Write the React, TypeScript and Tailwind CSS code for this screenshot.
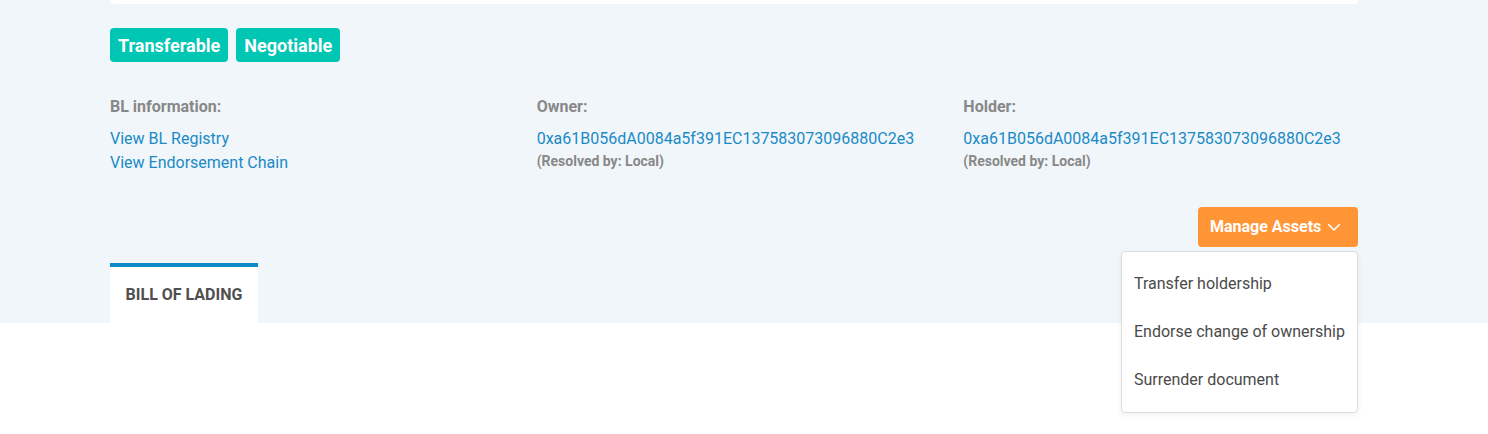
import React from "react";

const ChevronDown = () => (
  <svg width="18" height="18" viewBox="0 0 24 24" fill="none" stroke="currentColor" strokeWidth="2.2" strokeLinecap="round" strokeLinejoin="round">
    <path d="M5 9l7 7 7-7" />
  </svg>
);

export default function App() {
  return (
    <div className="min-h-[434px] bg-white" style={{ fontFamily: "Roboto, 'Noto Sans', sans-serif" }}>
      <div className="bg-[#f1f6fa]">
        <div className="w-[1248px] ml-[110px]">
          <div className="h-[4px] bg-white rounded-b-[4px]" />
          <div className="flex gap-2 mt-6">
            <span className="h-[34px] flex items-center px-2 rounded-[4px] bg-[#00c6b4] text-white font-bold text-[18px]">Transferable</span>
            <span className="h-[34px] flex items-center px-2 rounded-[4px] bg-[#00c6b4] text-white font-bold text-[18px]">Negotiable</span>
          </div>
          <div className="grid grid-cols-3 gap-8 mt-[35px]">
            <div>
              <div className="text-[16px] leading-[20px] font-bold text-[#888888]">BL information:</div>
              <div className="mt-[10px] flex flex-col text-[16px] leading-[24px] text-[#1a8ac6]">
                <span>View BL Registry</span>
                <span>View Endorsement Chain</span>
              </div>
            </div>
            <div>
              <div className="text-[16px] leading-[20px] font-bold text-[#888888]">Owner:</div>
              <div className="mt-[10px] text-[16px] leading-[24px] text-[#1a8ac6]">0xa61B056dA0084a5f391EC137583073096880C2e3</div>
              <div className="text-[14px] leading-[20px] font-bold text-[#888888]">(Resolved by: Local)</div>
            </div>
            <div>
              <div className="text-[16px] leading-[20px] font-bold text-[#888888]">Holder:</div>
              <div className="mt-[10px] text-[16px] leading-[24px] text-[#1a8ac6]">0xa61B056dA0084a5f391EC137583073096880C2e3</div>
              <div className="text-[14px] leading-[20px] font-bold text-[#888888]">(Resolved by: Local)</div>
            </div>
          </div>
          <div className="flex justify-end mt-[32px]">
            <div className="relative">
              <button className="h-[40px] w-[160px] flex items-center px-3 gap-[4px] rounded-[4px] bg-[#ff9535] text-white font-bold text-[16px]">
                Manage Assets
                <ChevronDown />
              </button>
              <div className="absolute right-0 top-[44px] w-[237px] bg-white border border-[#dddddd] rounded-[4px] shadow-[0_2px_6px_rgba(0,0,0,0.06)] py-2 z-10">
                <div className="h-12 flex items-center px-3 text-[16px] text-[#4a4a4a]">Transfer holdership</div>
                <div className="h-12 flex items-center px-3 text-[16px] text-[#4a4a4a]">Endorse change of ownership</div>
                <div className="h-12 flex items-center px-3 text-[16px] text-[#4a4a4a]">Surrender document</div>
              </div>
            </div>
          </div>
          <div className="flex mt-4">
            <div className="w-[148px] h-[60px] bg-white border-t-4 border-[#0b8ac6] flex items-center justify-center text-[16px] font-bold text-[#4f4f4f]">
              BILL OF LADING
            </div>
          </div>
        </div>
      </div>
    </div>
  );
}
